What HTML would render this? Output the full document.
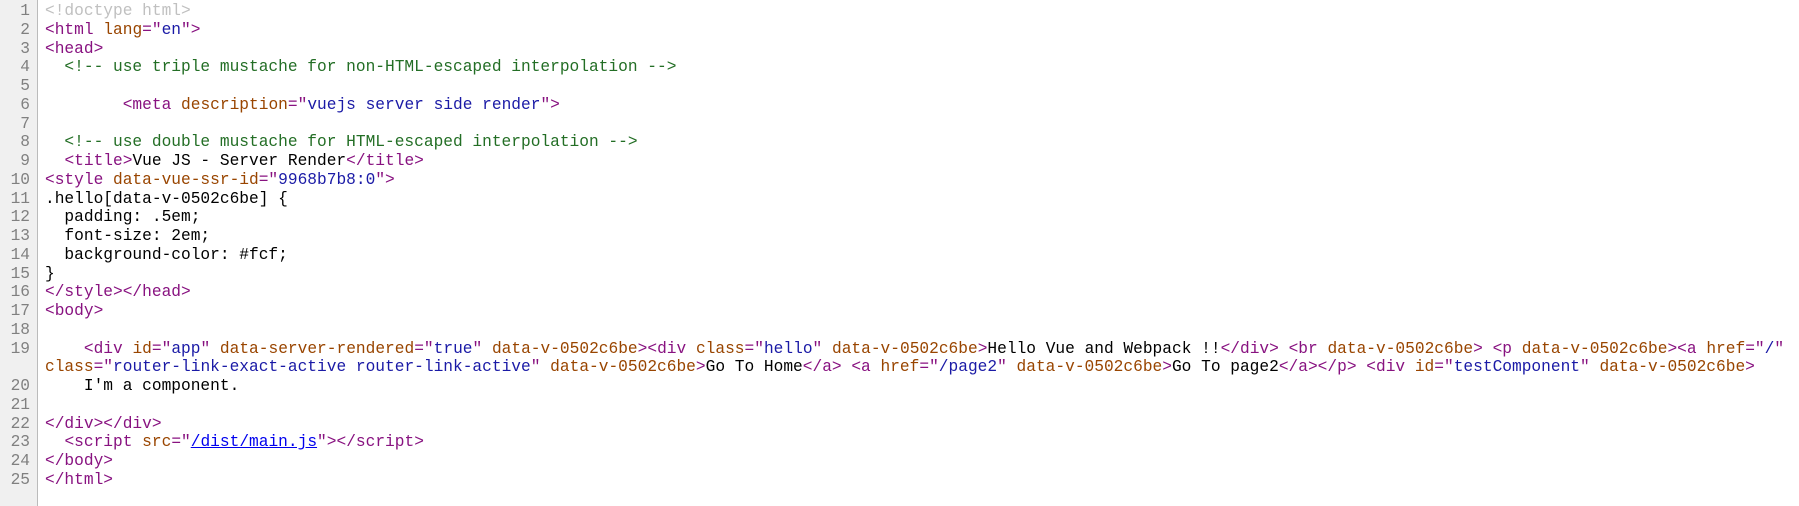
<!DOCTYPE html>
<html><head><style>
html,body{margin:0;padding:0;background:#fff;width:1799px;height:506px;overflow:hidden}
.w{position:relative;font-family:"Liberation Mono",monospace;font-size:16.2px;line-height:18.75px;padding-top:2px}
.g{position:absolute;left:0;top:0;width:37px;height:506px;background:#f0f0f0;border-right:1px solid #bbb}
.r{display:flex;white-space:pre;position:relative}
.n{width:30px;text-align:right;color:#808080;flex:none;margin-right:15px}
.t{color:#881280}.a{color:#994500}.v{color:#1a1aa6}.c{color:#236e25}.d{color:#c0c0c0}
.l{color:#1a1aa6;text-decoration:underline;color:#0000ee}
</style></head><body><div class="g"></div><div class="w">
<div class="r"><span class="n">1</span><span class="d">&lt;!doctype html&gt;</span></div>
<div class="r"><span class="n">2</span><span><span class="t">&lt;html </span><span class="a">lang</span><span class="t">="</span><span class="v">en</span><span class="t">"&gt;</span></span></div>
<div class="r"><span class="n">3</span><span class="t">&lt;head&gt;</span></div>
<div class="r"><span class="n">4</span><span class="c">  &lt;!-- use triple mustache for non-HTML-escaped interpolation --&gt;</span></div>
<div class="r"><span class="n">5</span><span></span></div>
<div class="r"><span class="n">6</span><span>        <span class="t">&lt;meta </span><span class="a">description</span><span class="t">="</span><span class="v">vuejs server side render</span><span class="t">"&gt;</span></span></div>
<div class="r"><span class="n">7</span><span></span></div>
<div class="r"><span class="n">8</span><span class="c">  &lt;!-- use double mustache for HTML-escaped interpolation --&gt;</span></div>
<div class="r"><span class="n">9</span><span>  <span class="t">&lt;title&gt;</span>Vue JS - Server Render<span class="t">&lt;/title&gt;</span></span></div>
<div class="r"><span class="n">10</span><span><span class="t">&lt;style </span><span class="a">data-vue-ssr-id</span><span class="t">="</span><span class="v">9968b7b8:0</span><span class="t">"&gt;</span></span></div>
<div class="r"><span class="n">11</span><span>.hello[data-v-0502c6be] {</span></div>
<div class="r"><span class="n">12</span><span>  padding: .5em;</span></div>
<div class="r"><span class="n">13</span><span>  font-size: 2em;</span></div>
<div class="r"><span class="n">14</span><span>  background-color: #fcf;</span></div>
<div class="r"><span class="n">15</span><span>}</span></div>
<div class="r"><span class="n">16</span><span class="t">&lt;/style&gt;&lt;/head&gt;</span></div>
<div class="r"><span class="n">17</span><span class="t">&lt;body&gt;</span></div>
<div class="r"><span class="n">18</span><span></span></div>
<div class="r"><span class="n">19</span><span>    <span class="t">&lt;div </span><span class="a">id</span><span class="t">="</span><span class="v">app</span><span class="t">" </span><span class="a">data-server-rendered</span><span class="t">="</span><span class="v">true</span><span class="t">" </span><span class="a">data-v-0502c6be</span><span class="t">&gt;&lt;div </span><span class="a">class</span><span class="t">="</span><span class="v">hello</span><span class="t">" </span><span class="a">data-v-0502c6be</span><span class="t">&gt;</span>Hello Vue and Webpack !!<span class="t">&lt;/div&gt;</span> <span class="t">&lt;br </span><span class="a">data-v-0502c6be</span><span class="t">&gt;</span> <span class="t">&lt;p </span><span class="a">data-v-0502c6be</span><span class="t">&gt;&lt;a </span><span class="a">href</span><span class="t">="</span><span class="v">/</span><span class="t">"</span></span></div>
<div class="r"><span class="n"></span><span><span class="a">class</span><span class="t">="</span><span class="v">router-link-exact-active router-link-active</span><span class="t">" </span><span class="a">data-v-0502c6be</span><span class="t">&gt;</span>Go To Home<span class="t">&lt;/a&gt;</span> <span class="t">&lt;a </span><span class="a">href</span><span class="t">="</span><span class="v">/page2</span><span class="t">" </span><span class="a">data-v-0502c6be</span><span class="t">&gt;</span>Go To page2<span class="t">&lt;/a&gt;&lt;/p&gt;</span> <span class="t">&lt;div </span><span class="a">id</span><span class="t">="</span><span class="v">testComponent</span><span class="t">" </span><span class="a">data-v-0502c6be</span><span class="t">&gt;</span></span></div>
<div class="r"><span class="n">20</span><span>    I'm a component.</span></div>
<div class="r"><span class="n">21</span><span></span></div>
<div class="r"><span class="n">22</span><span class="t">&lt;/div&gt;&lt;/div&gt;</span></div>
<div class="r"><span class="n">23</span><span>  <span class="t">&lt;script </span><span class="a">src</span><span class="t">="</span><span class="l">/dist/main.js</span><span class="t">"&gt;&lt;/script&gt;</span></span></div>
<div class="r"><span class="n">24</span><span class="t">&lt;/body&gt;</span></div>
<div class="r"><span class="n">25</span><span class="t">&lt;/html&gt;</span></div>
</div></body></html>
